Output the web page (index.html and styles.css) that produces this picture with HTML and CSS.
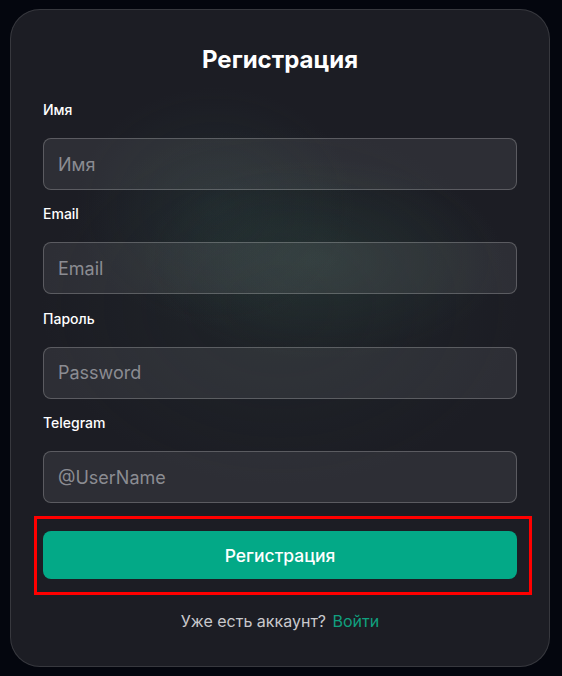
FILE: index.html
```html
<!DOCTYPE html>
<html lang="ru">
<head>
    <meta charset="UTF-8">
    <meta name="viewport" content="width=device-width, initial-scale=1.0">
    <title>Регистрация</title>
    <link rel="stylesheet" href="styles.css">
</head>
<body>
    <div class="card">
        <h1>Регистрация</h1>

        <!-- поля формы -->
        <div class="form-group">
            <label for="name">Имя</label>
            <input type="text" id="name" placeholder="Имя" />
        </div>
        <div class="form-group">
            <label for="email">Email</label>
            <input type="email" id="email" placeholder="Email" />
        </div>
        <div class="form-group">
            <label for="password">Пароль</label>
            <input type="password" id="password" placeholder="Password" />
        </div>
        <div class="form-group">
            <label for="telegram">Telegram</label>
            <input type="text" id="telegram" placeholder="@UserName" />
        </div>

        <div class="submit-wrap">
            <button class="submit">Регистрация</button>
        </div>

        <p class="login-hint">Уже есть аккаунт? <a href="#">Войти</a></p>
    </div>
</body>
</html>
```

FILE: styles.css
```css
body {
    font-family: Inter, "Noto Sans", sans-serif;
    margin: 0;
    padding: 0;
    background-color: #04060e;
    color: #fff;
}
.card {
    margin: 9px 12px 0 10px;
    padding: 34px 32px 35px 32px;
    border: 1px solid rgba(255, 255, 255, 0.12);
    border-radius: 30px;
    background:
        radial-gradient(ellipse 180px 100px at 58% 38%, rgba(55, 95, 80, 0.22), transparent),
        radial-gradient(ellipse 140px 120px at 38% 30%, rgba(50, 85, 80, 0.18), transparent),
        radial-gradient(ellipse 240px 180px at 50% 45%, rgba(40, 60, 55, 0.2), transparent),
        #1c1d24;
}
h1 {
    font-size: 24px;
    font-weight: 700;
    line-height: 32px;
    text-align: center;
    margin: 0 0 24px 0;
}
.form-group {
    margin-bottom: 14.4px;
}
.form-group label {
    display: block;
    font-size: 14px;
    font-weight: 500;
    line-height: 20px;
    margin-bottom: 18px;
}
.form-group input {
    box-sizing: border-box;
    width: 100%;
    height: 52px;
    padding: 0 14px;
    font-family: inherit;
    font-size: 18px;
    color: #fff;
    background-color: rgba(255, 255, 255, 0.08);
    border: 1px solid rgba(255, 255, 255, 0.22);
    border-radius: 8px;
}
.form-group input::placeholder {
    color: #8b8c92;
}
.submit-wrap {
    position: relative;
    margin-top: 28px;
}
.submit-wrap::after {
    content: "";
    position: absolute;
    top: -15px;
    left: -9px;
    right: -15px;
    bottom: -16px;
    border: 3px solid #ff0000;
}
.submit {
    display: block;
    width: 100%;
    height: 48px;
    font-family: inherit;
    font-size: 17.5px;
    font-weight: 500;
    color: #fff;
    background-color: #03a987;
    border: none;
    border-radius: 8px;
    cursor: pointer;
}
.login-hint {
    margin: 32px 0 0 0;
    font-size: 16px;
    line-height: 20px;
    text-align: center;
    color: #c9c9cd;
}
.login-hint a {
    color: #10a07f;
    text-decoration: none;
    margin-left: 2px;
}
```
